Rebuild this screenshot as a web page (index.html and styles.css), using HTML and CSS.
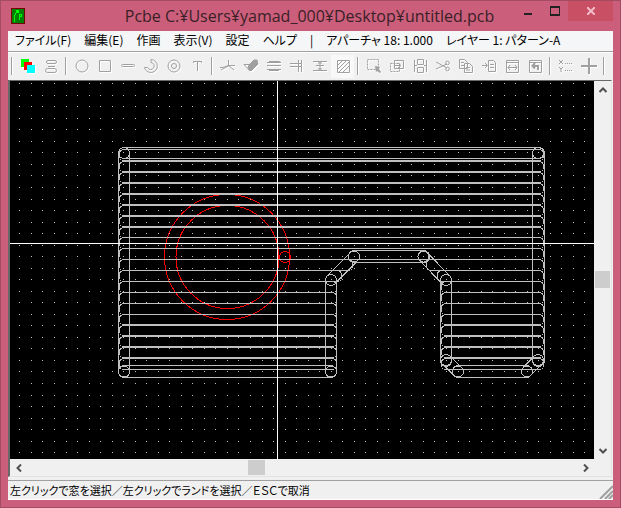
FILE: index.html
```html
<!DOCTYPE html>
<html lang="ja">
<head>
<meta charset="utf-8">
<title>Pcbe C:¥Users¥yamad_000¥Desktop¥untitled.pcb</title>
<link rel="stylesheet" href="styles.css">
</head>
<body>
<div class="window">
  <header class="titlebar">
    <svg class="app-icon" width="14" height="16" viewBox="0 0 14 16" shape-rendering="crispEdges"><rect width="14" height="16" fill="#700"/><rect x="1" y="1" width="12" height="14" fill="#008000"/><path d="M3.500 14V7M4 6.500L6.500 3.500M5 2.500h2v2h-2zM8.500 12V6.500h2v2h-2" fill="none" stroke="#0f0"/></svg>
    <h1 class="title">Pcbe C:¥Users¥yamad_000¥Desktop¥untitled.pcb</h1>
    <div class="caption-buttons">
      <button class="cap" aria-label="最小化"><svg width="10" height="10"><path d="M1 8h8" stroke="#222" stroke-width="2"/></svg></button>
      <button class="cap" aria-label="最大化"><svg width="10" height="10" shape-rendering="crispEdges"><path d="M0 1h10v8H0z" fill="none" stroke="#222" stroke-width="2"/></svg></button>
      <button class="cap close" aria-label="閉じる"><svg width="8" height="8"><path d="M0 0l8 8M8 0l-8 8" stroke="#f0bcc8" stroke-width="2"/></svg></button>
    </div>
  </header>
  <main class="client">
    <nav class="menubar">
      <button>ファイル(F)</button><button>編集(E)</button><button>作画</button><button>表示(V)</button><button>設定</button><button>ヘルプ</button><span>|</span><button>アパーチャ 18: 1.000</button><button>レイヤー 1: パターン-A</button>
    </nav>
    <div class="toolbar" id="toolbar"></div>
    <section class="workspace">
      <svg class="board" id="board" shape-rendering="crispEdges"></svg>
      <div class="vscroll"><button aria-label="上"><svg width="8" height="6"><path d="M0.500 5L4 1.500L7.500 5" /></svg></button><div class="track"><div class="thumb"></div></div><button aria-label="下"><svg width="8" height="6"><path d="M0.500 1L4 4.500L7.500 1"/></svg></button></div>
      <div class="hscroll"><button aria-label="左"><svg width="6" height="8"><path d="M5 0.500L1.500 4L5 7.500"/></svg></button><div class="track"><div class="thumb"></div></div><button aria-label="右"><svg width="6" height="8"><path d="M1 0.500L4.500 4L1 7.500"/></svg></button></div>
    </section>
    <footer class="statusbar"><span>左クリックで窓を選択／左クリックでランドを選択／ＥＳＣで取消</span><svg class="grip" width="14" height="14"><path d="M1 14L14 1M6 14L14 6M10 14L14 10" stroke="#a0a0a0" stroke-width="2"/></svg></footer>
  </main>
</div>
<script src="board.js"></script>
</body>
</html>
```

FILE: styles.css
```css
* { box-sizing: border-box; }
body { margin: 0; font-family: "Noto Sans", "Noto Sans CJK JP", sans-serif; }
button { border: 0; padding: 0; margin: 0; background: none; font: inherit; color: inherit; }
svg { display: block; flex: none; }
.window { min-height: 100vh; display: flex; flex-direction: column; background: #cb5f7b; border: 1px solid #a34c62; padding: 0 7px 7px; }
.titlebar { height: 30px; display: flex; align-items: center; padding-left: 3px; flex: none; }
.title { margin: 0; flex: 1; font-family: "Open Sans", "Noto Sans", sans-serif; font-size: 16px; font-weight: 400; line-height: 30px; color: #3a2027; white-space: nowrap; text-align: center; padding-left: 80px; }
.caption-buttons { display: flex; align-self: flex-start; }
.cap { width: 27px; height: 20px; display: grid; place-items: center; }
.cap.close { width: 45px; background: #c94f64; }
.client { flex: 1; display: flex; flex-direction: column; background: #f0f0f0; min-height: 0; }
.menubar { height: 20px; display: flex; gap: 13px; align-items: center; padding-left: 7px; background: #f5f6f7; font-family: "Noto Sans CJK JP", sans-serif; font-size: 12px; line-height: 18px; font-feature-settings: "palt"; white-space: nowrap; color: #000; }
.menubar > * { margin-top: -2px; }
.toolbar { height: 29px; border-top: 1px solid #a0a0a0; box-shadow: inset 0 1px #fff; display: flex; align-items: center; overflow: hidden; }
.toolbar button { width: 23px; height: 23px; display: grid; place-items: center; flex: none; }
.toolbar .sep { width: 1px; height: 18px; background: #a0a0a0; box-shadow: 1px 0 #fff; margin: 0 4px 0 3px; flex: none; }
.toolbar svg { fill: none; stroke: #a0a0a0; filter: drop-shadow(1px 1px 0 #fff); }
.toolbar .checked { background: #f8f8f8; }
.workspace { flex: 1; display: grid; grid-template-columns: minmax(0, 1fr) 17px; grid-template-rows: minmax(0, 1fr) 17px; border: 1px solid #696969; border-left-width: 2px; border-right-color: #e3e3e3; border-bottom-color: #e3e3e3; margin-right: 1px; min-height: 0; }
.board { width: 100%; height: 100%; background: #000; overflow: hidden; }
.vscroll, .hscroll { display: flex; background: #f0f0f0; }
.vscroll { flex-direction: column; }
.vscroll button, .hscroll button { width: 17px; height: 17px; display: grid; place-items: center; }
.vscroll path, .hscroll path { fill: none; stroke: #505050; stroke-width: 2; }
.track { flex: 1; display: flex; align-items: center; }
.track::before, .track::after { content: ""; }
.hscroll .track::before { flex: 41; }
.hscroll .track::after { flex: 58; }
.vscroll .track { flex-direction: column; }
.vscroll .track::before { flex: 53; }
.vscroll .track::after { flex: 47; }
.thumb { background: #cdcdcd; width: 17px; height: 15px; }
.vscroll .thumb { width: 15px; height: 17px; }
.statusbar { height: 20px; margin-top: 3px; border-top: 1px solid #a0a0a0; border-bottom: 1px solid #fff; display: flex; justify-content: space-between; align-items: center; padding-left: 2px; font-family: "Noto Sans CJK JP", sans-serif; font-size: 11px; line-height: 18px; font-feature-settings: "palt"; white-space: nowrap; }
.grip { align-self: flex-end; }
```

FILE: board.js
```js
const NS = 'http://www.w3.org/2000/svg';
const board = document.getElementById('board');
const layer = document.createElementNS(NS, 'g');
layer.setAttribute('transform', 'translate(-10 -81)');
layer.setAttribute('fill', 'none');
board.append(layer);

function add(tag, attrs) {
  const el = document.createElementNS(NS, tag);
  for (const key in attrs) el.setAttribute(key, attrs[key]);
  layer.append(el);
}

// Grid points
let dots = '';
for (let i = 0; i < 50; i++)
  for (let j = 0; j < 33; j++)
    dots += `M${Math.round(19.4 + i * 11.53)} ${Math.round(83.2 + j * 11.53) + 0.5}h1`;
add('path', { d: dots, stroke: '#c0c0c0' });

// Round land on the other layer
for (const [x, y, r] of [[227, 257, 62.5], [227.5, 257, 51.5], [285, 257, 5.5]])
  add('circle', { cx: x, cy: y, r, stroke: '#ff0000' });

// Capsule given by its outermost pixel columns and rows
function capsule(x1, y1, x2, y2, round = 6) {
  const w = x2 - x1, h = y2 - y1;
  add('rect', { x: x1 + 0.5, y: y1 + 0.5, width: w, height: h, rx: Math.min(w / 2, h / 2, round), stroke: '#c0c0c0' });
}
// Fill strokes
const edges = [[149,160],[161,171],[172,182],[183,193],[194,204],[205,215],[216,226],[227,237],[237,248],[248,259],[259,270],[270,281],[281,292],[292,303],[303,314],[314,324],[325,335],[336,346],[347,357],[358,369]];
for (const [top, bottom] of edges) {
  if (bottom <= 259) { capsule(119, top, 543, bottom, 4); continue; }
  const left = top === 259 ? 352 : top === 270 ? 341 : 336;
  const right = top === 259 ? 426 : top === 270 ? 437 : 441;
  capsule(119, top, left, bottom, 4);
  capsule(right, top, 543, bottom, 4);
}
// Outline strokes
capsule(118, 147, 544, 158);
capsule(118, 147, 129, 377);
capsule(118, 365, 336, 377);
capsule(325, 274, 336, 377);
capsule(348, 250, 429, 262);
capsule(440, 274, 451, 366);
capsule(452, 365, 532, 377);
capsule(532, 147, 544, 366);
function diagonal(x1, y1, x2, y2) {
  const r = 5.5, len = Math.hypot(x2 - x1, y2 - y1);
  const nx = (y2 - y1) / len * r, ny = (x1 - x2) / len * r;
  for (const s of [-1, 1])
    add('line', { x1: x1 + s * nx, y1: y1 + s * ny, x2: x2 + s * nx, y2: y2 + s * ny, stroke: '#c0c0c0' });
  for (const [x, y] of [[x1, y1], [x2, y2]]) add('circle', { cx: x, cy: y, r, stroke: '#c0c0c0' });
}
diagonal(331, 280, 354, 256.5);
diagonal(423.5, 256.5, 446, 280);
diagonal(446, 360, 458, 371.5);
diagonal(527, 371.5, 538, 360);
for (const [x, y] of [[124, 153], [538, 153], [124, 371.5], [331, 371.5]])
  add('circle', { cx: x, cy: y, r: 5.5, stroke: '#c0c0c0' });
// Cross cursor
add('path', { d: 'M277.500 0V2000M0 243.500H4000', stroke: '#ffffff' });

const icons = [
  '|',
  ['レイヤー', '<path fill="#0f0" stroke="none" d="M1 1h8v8H1z"/><path fill="#f00" stroke="none" d="M4 4h8v8H4z"/><path fill="#0ff" stroke="none" d="M7 7h8v8H7z"/>'],
  ['アパーチャ', '<rect x="3.500" y="2.500" width="10" height="3" rx="1.500"/><path d="M5 8.500h7"/><rect x="2.500" y="10.500" width="11" height="4" rx="2"/>'],
  '|',
  ['円', '<circle cx="8" cy="8" r="6"/>'],
  ['四角', '<path d="M2.500 2.500h11v11h-11z"/>'],
  ['ライン', '<rect x="1.500" y="6.500" width="13" height="2" rx="1"/>'],
  ['円弧', '<path d="M8 4.500V1.500a6.500 6.500 0 1 1-6.500 8h3a3.500 3.500 0 1 0 3.500-5z"/>'],
  ['ランド', '<circle cx="8" cy="8" r="6"/><circle cx="8" cy="8" r="2.500"/>'],
  ['文字', '<path d="M4.500 5V3.500h8V5M8.500 3v10"/>'],
  '|',
  ['分割', '<path d="M8.500 2v6L1 12M0 9.500h3L8.500 7.500L14 12M8 7.500h7"/>'],
  ['消去', '<path fill="#a0a0a0" d="M6 7l5-5h3l1 4l-7 7l-3-3z"/><path d="M1 6.500h5M1 6.500L7 13"/>'],
  ['線変更', '<path d="M3 3.500h10l2 1H1M1 7.500h14M1 11.500h14M3 12.500h10"/>'],
  ['移動端点', '<path d="M1 5.500h11M1 8.500h11M9.500 2v12M12.500 2v12"/>'],
  ['間隔', '<path d="M1 3.500h14M1 12.500h14M4 7.500h8M8 4v8M6 5h4M6 11h4"/>'],
  ['塗りつぶし', '<path d="M2.500 2.500h12v12h-12zM3 7l4-4M3 11l8-8M4 14L14 4M8 14l6-6"/>', 'checked'],
  '|',
  ['選択', '<path stroke-dasharray="2 1" d="M1.500 1.500h11v10h-11z"/><path fill="#a0a0a0" stroke="none" d="M9 8l5 1l-1 2l2 3l-1 1l-3-2l-1 1z"/>'],
  ['移動', '<path stroke-dasharray="2 1" d="M1.500 5.500h9v8h-9z"/><path d="M5.500 2.500h9v8h-9zM5 7.500h6M9 5l3 2.500L9 10"/>'],
  ['反転', '<path d="M5.500 1.500h6v5h-6zM5.500 9.500h6v5h-6zM2.500 2v12M14.500 2v12M2 7.500h3M12 7.500h3"/>'],
  ['切り取り', '<path d="M1 4l11 6M1 11l11-5"/><circle cx="12.500" cy="5" r="1.800"/><circle cx="12.500" cy="11" r="1.800"/>'],
  ['コピー', '<path d="M1.500 1.500h5l3 3v6h-8zM6.500 5.500h5l3 3v6h-8zM3 4.500h3M3 7.500h3M8 9.500h4M8 12h4"/>'],
  ['貼り付け', '<path d="M7.500 2.500h5l2 2v9h-7zM9 6.500h4M9 9.500h4M1 7.500h5M4 5l2.500 2.500L4 10"/>'],
  ['幅', '<path d="M2.500 2.500h12v12h-12zM2 4.500h12M4 9.500h9M6 7L4 9.500L6 12M11 7l2 2.500L11 12"/>'],
  ['元に戻す', '<path d="M2.500 2.500h12v12h-12zM2 4.500h12"/><path stroke-width="2" d="M11 12V8H6M8 5L5.500 8L8 10.500"/>'],
  '|',
  ['座標', '<path d="M1 2l4 4M5 2L1 6M1 9l2 2l2-2M3 11v3"/><path stroke-dasharray="1 1" d="M7 5.500h8M7 12.500h8"/>'],
  ['原点', '<path stroke-width="2" d="M8 0v16M0 8h16"/>'],
  '|',
  ['再描画', '<circle stroke="#000" cx="7" cy="6" r="4.500"/>']
];
document.getElementById('toolbar').innerHTML = icons.map(icon => icon === '|'
  ? '<span class="sep"></span>'
  : `<button class="${icon[2] || 'tool'}" aria-label="${icon[0]}"><svg width="16" height="16" viewBox="0 0 16 16">${icon[1]}</svg></button>`).join('');
```
